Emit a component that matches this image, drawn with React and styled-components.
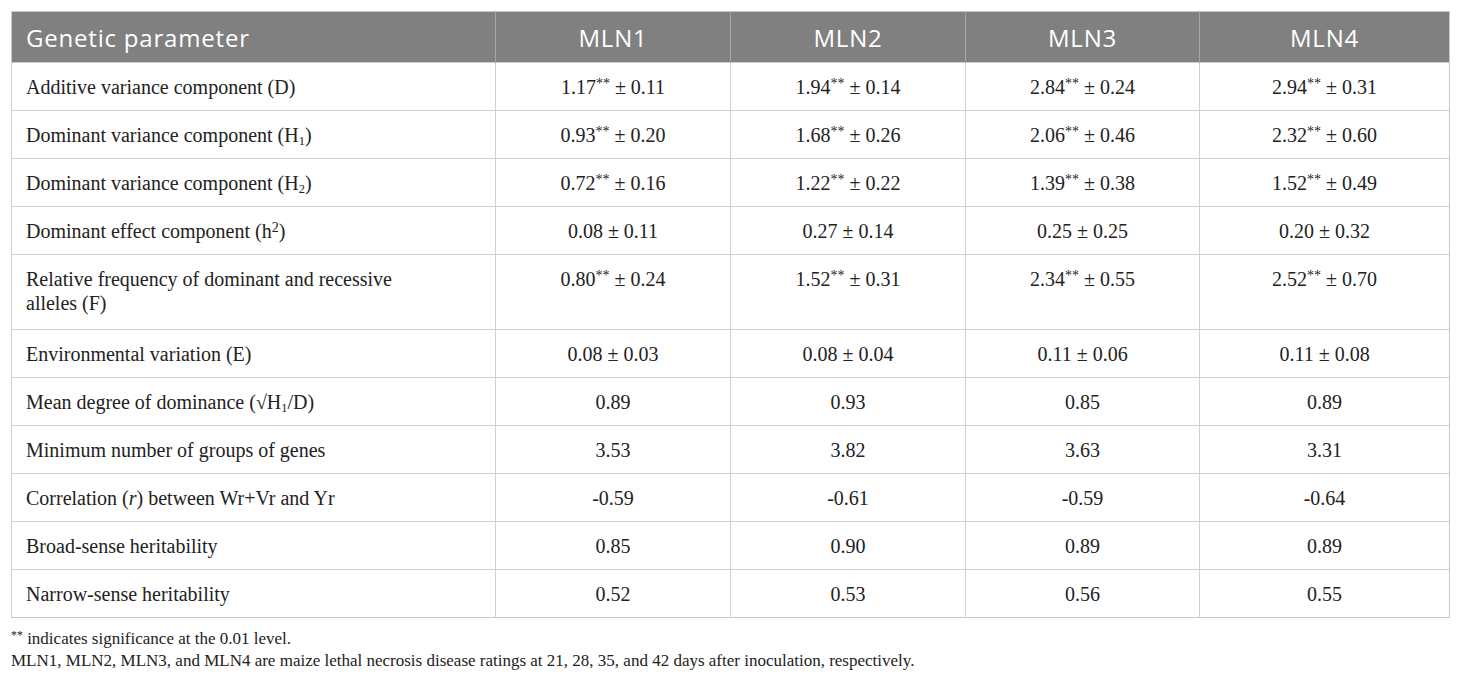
import React from "react";
import styled, { createGlobalStyle } from "styled-components";

const GlobalStyle = createGlobalStyle`
  body {
    margin: 0;
    background: #fff;
  }
`;

const Sup = styled.sup`
  font-size: 0.7em;
  vertical-align: 0.45em;
  line-height: 0;
`;

const Sub = styled.sub`
  font-size: 0.62em;
  vertical-align: -0.25em;
  line-height: 0;
`;

const Stars = () => <Sup>**</Sup>;

const rows = [
  {
    label: <>Additive variance component (D)</>,
    values: [
      ["1.17", true, "0.11"],
      ["1.94", true, "0.14"],
      ["2.84", true, "0.24"],
      ["2.94", true, "0.31"],
    ],
  },
  {
    label: (
      <>
        Dominant variance component (H<Sub>1</Sub>)
      </>
    ),
    values: [
      ["0.93", true, "0.20"],
      ["1.68", true, "0.26"],
      ["2.06", true, "0.46"],
      ["2.32", true, "0.60"],
    ],
  },
  {
    label: (
      <>
        Dominant variance component (H<Sub>2</Sub>)
      </>
    ),
    values: [
      ["0.72", true, "0.16"],
      ["1.22", true, "0.22"],
      ["1.39", true, "0.38"],
      ["1.52", true, "0.49"],
    ],
  },
  {
    label: (
      <>
        Dominant effect component (h<Sup>2</Sup>)
      </>
    ),
    values: [
      ["0.08", false, "0.11"],
      ["0.27", false, "0.14"],
      ["0.25", false, "0.25"],
      ["0.20", false, "0.32"],
    ],
  },
  {
    label: (
      <>
        Relative frequency of dominant and recessive
        <br />
        alleles (F)
      </>
    ),
    tall: true,
    values: [
      ["0.80", true, "0.24"],
      ["1.52", true, "0.31"],
      ["2.34", true, "0.55"],
      ["2.52", true, "0.70"],
    ],
  },
  {
    label: <>Environmental variation (E)</>,
    values: [
      ["0.08", false, "0.03"],
      ["0.08", false, "0.04"],
      ["0.11", false, "0.06"],
      ["0.11", false, "0.08"],
    ],
  },
  {
    label: (
      <>
        Mean degree of dominance (√H<Sub>1</Sub>/D)
      </>
    ),
    values: ["0.89", "0.93", "0.85", "0.89"],
  },
  {
    label: <>Minimum number of groups of genes</>,
    values: ["3.53", "3.82", "3.63", "3.31"],
  },
  {
    label: (
      <>
        Correlation (<i>r</i>) between Wr+Vr and Yr
      </>
    ),
    values: ["-0.59", "-0.61", "-0.59", "-0.64"],
  },
  {
    label: <>Broad-sense heritability</>,
    values: ["0.85", "0.90", "0.89", "0.89"],
  },
  {
    label: <>Narrow-sense heritability</>,
    values: ["0.52", "0.53", "0.56", "0.55"],
  },
];

const Page = styled.div`
  padding: 11px 11px 0 11px;
  font-family: "Liberation Serif", "DejaVu Serif", serif;
  color: #222;
`;

const Table = styled.table`
  width: 1438px;
  border-collapse: collapse;
  table-layout: fixed;
  border: 1px solid #c8c8c8;
`;

const HeadCell = styled.th`
  background: #808080;
  color: #fff;
  font-family: "Open Sans", "Noto Sans", sans-serif;
  font-weight: 400;
  font-size: 24px;
  letter-spacing: 0.8px;
  height: 50px;
  padding: 0 14px;
  text-align: ${(p) => (p.$left ? "left" : "center")};
  border-left: 1px solid #a6a6a6;
  &:first-child {
    border-left: none;
  }
`;

const Row = styled.tr`
  height: ${(p) => (p.$tall ? "75px" : "48px")};
  border-top: 1px solid #cfcfcf;
`;

const Cell = styled.td`
  font-size: 20px;
  line-height: 24px;
  padding: 0 14px;
  vertical-align: ${(p) => (p.$top ? "top" : "middle")};
  padding-top: ${(p) => (p.$top ? "12px" : "0")};
  text-align: ${(p) => (p.$left ? "left" : "center")};
  border-left: 1px solid #cfcfcf;
  color: #222;
`;

const Notes = styled.div`
  padding-top: 10px;
  font-size: 17px;
  line-height: 22px;
  color: #222;
`;

const Value = ({ v }) => {
  if (typeof v === "string") return v;
  const [mean, sig, se] = v;
  return (
    <>
      {mean}
      {sig && <Stars />} ± {se}
    </>
  );
};

const App = () => {
  return (
    <Page>
      <GlobalStyle />
      <Table>
        <colgroup>
          <col style={{ width: 484 }} />
          <col style={{ width: 235 }} />
          <col style={{ width: 235 }} />
          <col style={{ width: 234 }} />
          <col style={{ width: 250 }} />
        </colgroup>
        <thead>
          <tr>
            <HeadCell $left>Genetic parameter</HeadCell>
            <HeadCell>MLN1</HeadCell>
            <HeadCell>MLN2</HeadCell>
            <HeadCell>MLN3</HeadCell>
            <HeadCell>MLN4</HeadCell>
          </tr>
        </thead>
        <tbody>
          {rows.map((r, i) => (
            <Row key={i} $tall={r.tall}>
              <Cell $left $top={r.tall}>
                {r.label}
              </Cell>
              {r.values.map((v, j) => (
                <Cell key={j} $top={r.tall}>
                  <Value v={v} />
                </Cell>
              ))}
            </Row>
          ))}
        </tbody>
      </Table>
      <Notes>
        <div>
          <Sup>**</Sup> indicates significance at the 0.01 level.
        </div>
        <div>
          MLN1, MLN2, MLN3, and MLN4 are maize lethal necrosis disease ratings
          at 21, 28, 35, and 42 days after inoculation, respectively.
        </div>
      </Notes>
    </Page>
  );
};

export default App;
